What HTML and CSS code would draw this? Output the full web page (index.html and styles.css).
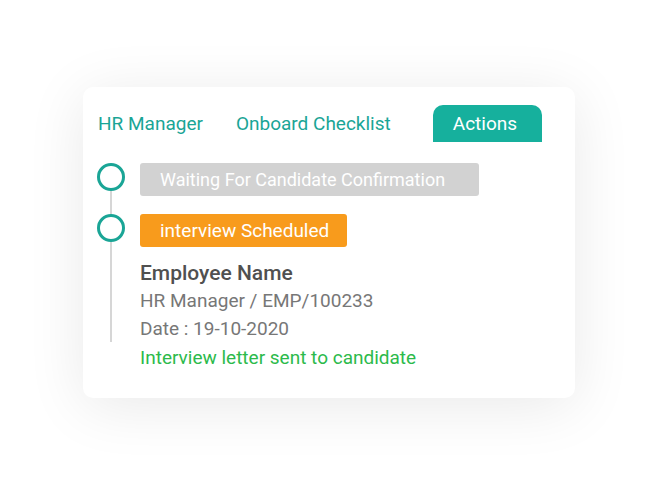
FILE: index.html
```html
<!DOCTYPE html>
<html>
<head>
<meta charset="utf-8">
<link rel="stylesheet" href="styles.css">
</head>
<body>
<div class="card">
  <div class="tabs">
    <div class="tab tab-hr">HR Manager</div>
    <div class="tab tab-onboard">Onboard Checklist</div>
    <div class="tab tab-active">Actions</div>
  </div>
  <div class="timeline">
    <div class="item">
      <span class="dot"></span>
      <div class="content">
        <div class="badge badge-grey">Waiting For Candidate Confirmation</div>
      </div>
    </div>
    <div class="item">
      <span class="dot"></span>
      <div class="content">
        <div class="badge badge-orange">interview Scheduled</div>
        <div class="details">
          <div class="name">Employee Name</div>
          <div class="meta">HR Manager / EMP/100233</div>
          <div class="meta">Date : 19-10-2020</div>
          <div class="note">Interview letter sent to candidate</div>
        </div>
      </div>
    </div>
  </div>
</div>
</body>
</html>
```

FILE: styles.css
```css
* { box-sizing: border-box; }
html, body { margin: 0; background: #ffffff; }
body {
  width: 672px;
  height: 492px;
  padding: 87px 0 0 83px;
  font-family: Roboto, "Liberation Sans", sans-serif;
  overflow: hidden;
}
.card {
  width: 492px;
  height: 311px;
  background: #fff;
  border-radius: 10px;
  box-shadow: 0 8px 60px rgba(0,0,0,0.09);
  padding: 18px 0 0 14px;
}
.tabs {
  display: flex;
  align-items: flex-end;
  height: 37px;
  font-size: 19px;
  color: #1aa596;
}
.tab { line-height: 37px; white-space: nowrap; }
.tab-hr { margin-left: 1px; }
.tab-onboard { margin-left: 33px; }
.tab-active {
  margin-left: 42px;
  width: 109px;
  padding-left: 20px;
  background: #16b09d;
  color: #fff;
  border-radius: 10px 10px 0 0;
}
.timeline {
  position: relative;
  margin-top: 21px;
}
.timeline::before {
  content: "";
  position: absolute;
  left: 13px;
  top: 26px;
  width: 2px;
  height: 153px;
  background: #d6d6d6;
}
.item {
  display: flex;
  gap: 15px;
  margin-bottom: 18px;
}
.dot {
  position: relative;
  flex: none;
  width: 28px;
  height: 28px;
  border: 3px solid #1aa596;
  border-radius: 50%;
  background: #fff;
}
.badge {
  display: inline-block;
  height: 33px;
  line-height: 33px;
  padding: 0 20px;
  border-radius: 3px;
  color: #fff;
  font-size: 19px;
  white-space: nowrap;
}
.badge-grey { background: #d2d2d2; width: 339px; font-size: 18px; }
.badge-orange { background: #f89b1c; width: 207px; }
.details { margin-top: 13px; }
.name {
  font-size: 21px;
  font-weight: 500;
  color: #505050;
  line-height: 27px;
}
.meta {
  font-size: 19px;
  color: #777;
  line-height: 28px;
}
.note {
  font-size: 19px;
  color: #2cba4b;
  line-height: 28px;
  margin-top: 1px;
}
```
